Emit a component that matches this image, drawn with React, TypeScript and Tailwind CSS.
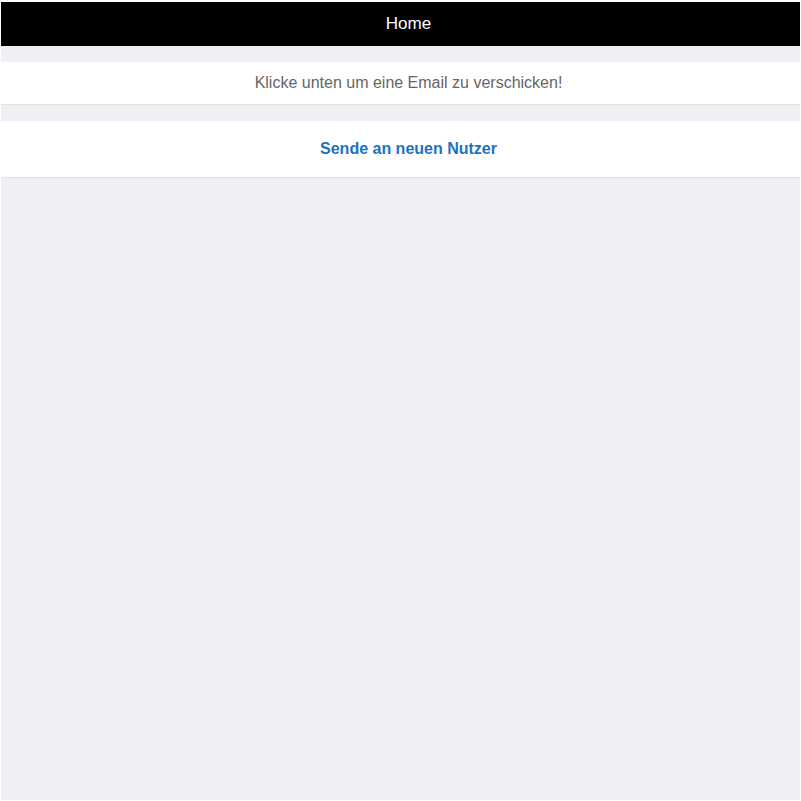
export default function App() {
  return (
    <div className="bg-white pt-[2px] pl-[1px] pr-[1px] pb-[1px] h-[801px]" style={{ fontFamily: '"Liberation Sans", Arial, sans-serif' }}>
      <div className="h-full bg-[#efeff4] flex flex-col">
        <div className="h-[44px] bg-black flex items-center justify-center pl-[16px] text-white text-[17px]">Home</div>
        <div className="mt-[16px] h-[43px] bg-white border-b border-[#e2e2e6] flex items-center justify-center pl-[16px] text-[16px] text-[#666]">
          Klicke unten um eine Email zu verschicken!
        </div>
        <div className="mt-[16px] h-[57px] bg-white border-b border-[#e2e2e6] flex items-center justify-center pl-[16px] text-[16px] font-bold text-[#1a73c2]">
          Sende an neuen Nutzer
        </div>
      </div>
    </div>
  );
}
